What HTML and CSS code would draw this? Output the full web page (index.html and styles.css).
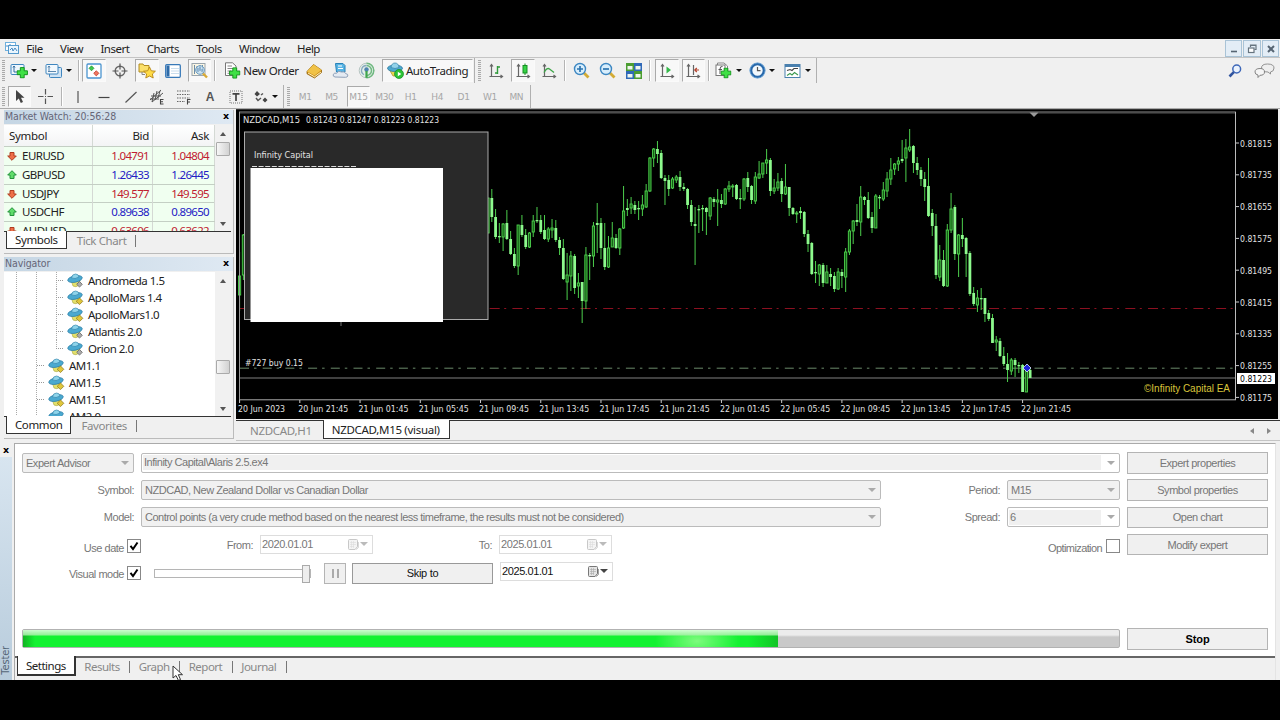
FILE: index.html
```
<!DOCTYPE html>
<html lang="en">
<head>
    <meta charset="UTF-8">
    <meta name="viewport" content="width=device-width, initial-scale=1.0">
    <title>NZDCAD,M15 (visual)</title>
    <link rel="stylesheet" href="styles.css">
</head>
<body>
    <!-- Shared icons -->
    <svg class="defs" width="0" height="0">
        <symbol id="expert" viewBox="0 0 17 15">
            <path d="M4 7 L6 13 Q9 15 12 12 L13 7Z" fill="#e3e06a" stroke="#a9a640" stroke-width=".6"/>
            <ellipse cx="8" cy="6" rx="7.4" ry="3.2" transform="rotate(-12 8 6)" fill="#4aa9d0" stroke="#2a7ca5" stroke-width=".7"/>
            <path d="M4.5 5 Q5 1 8.500 1 Q11.500 1 12 4 Q8 6.500 4.500 5Z" fill="#8fd4ea" stroke="#2a7ca5" stroke-width=".6"/>
            <path d="M12.500 8 L15.800 11.300 L12.500 14.600 L9.200 11.300Z" fill="#e0c63a" stroke="#927d20" stroke-width=".8"/>
        </symbol>
        <symbol id="expert-off" viewBox="0 0 17 15">
            <path d="M4 7 L6 13 Q9 15 12 12 L13 7Z" fill="#e3e06a" stroke="#a9a640" stroke-width=".6"/>
            <ellipse cx="8" cy="6" rx="7.4" ry="3.2" transform="rotate(-12 8 6)" fill="#4aa9d0" stroke="#2a7ca5" stroke-width=".7"/>
            <path d="M4.5 5 Q5 1 8.500 1 Q11.500 1 12 4 Q8 6.500 4.500 5Z" fill="#8fd4ea" stroke="#2a7ca5" stroke-width=".6"/>
            <path d="M12.500 8.500 L15.300 11.300 L12.500 14.100 L9.700 11.300Z" fill="#aaa" stroke="#666" stroke-width=".8"/>
        </symbol>
        <symbol id="up" viewBox="0 0 10 10">
            <path d="M5 .7 L9.300 5 H7 V8.500 H3 V5 H.7Z" fill="#5fdc6a" stroke="#23923a"/>
        </symbol>
        <symbol id="down" viewBox="0 0 10 10">
            <path d="M5 9.300 L9.300 5 H7 V1.500 H3 V5 H.7Z" fill="#ee7048" stroke="#b03c20"/>
        </symbol>
        <symbol id="plus" viewBox="0 0 12 12">
            <path d="M4 .6 H8 V4 H11.400 V8 H8 V11.400 H4 V8 H.6 V4 H4Z" fill="#3fe045" stroke="#14911d"/>
        </symbol>
        <symbol id="calendar" viewBox="0 0 11 11">
            <path d="M.5 1.500 Q.5 .5 1.500 .5 H8.500 Q9.500 .5 9.500 1.500 V7.500 L7 10.500 H1.500 Q.5 10.500 .5 9.500Z" fill="#e4e4e4" stroke="#777"/>
            <path d="M2 3.500 H8 M2 5.500 H8 M2 7.500 H6 M3.500 2 V9 M5.500 2 V9" stroke="#aaa" stroke-width=".6"/>
            <path d="M10.200 3 V8.500 L8 10.700" fill="none" stroke="#555" stroke-width=".8"/>
        </symbol>
        <symbol id="check" viewBox="0 0 10 10">
            <path d="M1.500 4.800 L4 8 L8.500 1.500" fill="none" stroke="#000" stroke-width="2"/>
        </symbol>
    </svg>

    <div class="terminal">
        <div class="menubar">
            <svg class="logo" width="14" height="14" viewBox="0 0 14 14"><rect x=".5" y="1.500" width="10" height="8" fill="#fff" stroke="#6fb0dd"/><rect x="3.500" y="4.500" width="10" height="8" fill="#eaf5fd" stroke="#5599cc"/><path d="M5 9 L7 7 L8 10 L10 7 L12 10 M2 4 V6 M5 3 V4" fill="none" stroke="#4a8cc4"/></svg>
            <span>File</span>
            <span>View</span>
            <span>Insert</span>
            <span>Charts</span>
            <span>Tools</span>
            <span>Window</span>
            <span>Help</span>
            <div class="window-buttons">
                <i><svg width="16" height="16" viewBox="0 0 16 16"><path d="M5 10.500 H11" stroke="#566573" stroke-width="1.600"/></svg></i>
                <i><svg width="16" height="16" viewBox="0 0 16 16"><path d="M6.500 6 V4 H12 V8.500 H10.500 M6.500 4.500 H12" fill="none" stroke="#66747f" stroke-width="1.200"/><rect x="4.500" y="7" width="5.500" height="4.500" fill="#fff" stroke="#66747f" stroke-width="1.200"/></svg></i>
                <i><svg width="16" height="16" viewBox="0 0 16 16"><path d="M5 5 L11 11 M11 5 L5 11" stroke="#566573" stroke-width="2"/></svg></i>
            </div>
        </div>

        <div class="toolbar toolbar-main">
            <i class="grip"></i>
            <div class="tool drop">
                <svg width="18" height="16" viewBox="0 0 18 16"><rect x="1" y="1.500" width="13" height="10" rx="1" fill="#eef6fd" stroke="#3f86bf"/><path d="M4 3 V9 H9 M3 4.500 L4 3 L5 4.500" fill="none" stroke="#356f9f"/><use href="#plus" x="6.500" y="4" width="11.500" height="11.500"/></svg>
                <b class="caret"></b>
            </div>
            <div class="tool drop">
                <svg width="18" height="16" viewBox="0 0 18 16"><rect x="4.500" y="4.500" width="12" height="10" rx="1" fill="#cfe3f4" stroke="#3f86bf"/><rect x="1" y="1.500" width="12" height="9.500" rx="1" fill="#f2f8fd" stroke="#3f86bf"/><path d="M4 3 V8.500 H11 M3 4.500 L4 3 L5 4.500 M3 8.500 H4" fill="none" stroke="#4a7ba6" stroke-width=".9"/></svg>
                <b class="caret"></b>
            </div>
            <i class="sep sep-thin"></i>
            <div class="tool pressed"><svg width="16" height="16" viewBox="0 0 16 16"><rect x="1" y="1" width="14" height="14" rx="1" fill="#fff" stroke="#4b94cf" stroke-width="1.300"/><path d="M5.500 2.800 L8 5.300 L5.500 7.800 L3 5.300Z" fill="#3fc84a" stroke="#1d8c2c" stroke-width=".7"/><path d="M10.300 7.700 L12.900 10.300 L10.300 12.900 L7.700 10.300Z" fill="#ef7660" stroke="#b6301c" stroke-width=".7"/></svg></div>
            <div class="tool"><svg width="16" height="16" viewBox="0 0 16 16"><circle cx="8" cy="8" r="4.800" fill="none" stroke="#666" stroke-width="1.400"/><path d="M8 .5 V6.500 M8 9.500 V15.500 M.5 8 H6.500 M9.500 8 H15.500" stroke="#555" stroke-width="1.200"/></svg></div>
            <div class="tool pressed"><svg width="18" height="17" viewBox="0 0 18 17"><path d="M1 2 H5 L6 3.500 H11 V10 H1Z" fill="#fbe06a" stroke="#b28c22"/><path d="M4 10 V12.500 H7" fill="none" stroke="#888"/><path d="M11.500 5 L13.300 8.800 L17.400 9.200 L14.400 12 L15.200 16 L11.500 14 L7.800 16 L8.600 12 L5.600 9.200 L9.700 8.800Z" fill="#ffdb45" stroke="#b58416" stroke-width=".9"/></svg></div>
            <div class="tool"><svg width="16" height="14" viewBox="0 0 16 14"><rect x=".7" y=".7" width="14.600" height="12.600" rx="1" fill="#fff" stroke="#3879b8" stroke-width="1.300"/><rect x="1.500" y="1.500" width="3" height="11" fill="#2d6aa8"/><path d="M6 4.500 H14 M6 7 H14 M6 9.500 H14" stroke="#c9dded"/></svg></div>
            <div class="tool pressed"><svg width="18" height="17" viewBox="0 0 18 17"><rect x="1" y="1.500" width="13" height="12" fill="#fbf6e4" stroke="#9aa5ad"/><path d="M3.500 3 V12 M6 4 V9 M9 3 V8 M11.500 3 V9" stroke="#6c8da8"/><circle cx="9" cy="8" r="4.300" fill="#bddcf3" fill-opacity=".75" stroke="#6798c0"/><path d="M7 6 V10 M9 5 V9 M11 7 V10" stroke="#4c7ca8" stroke-width=".8"/><path d="M12 11.500 L16 15.500" stroke="#d8aa36" stroke-width="2.400"/></svg></div>
            <i class="sep sep-wide"></i>
            <div class="tool new-order">
                <svg width="17" height="17" viewBox="0 0 17 17"><path d="M1.500 .8 H8.500 L12 4 V13.500 H1.500Z" fill="#fff" stroke="#777"/><path d="M3.500 4 H8 M3.500 6.500 H10 M3.500 9 H7 M3.500 11.300 H6" stroke="#888"/><use href="#plus" x="5" y="5.200" width="11.500" height="11.500"/></svg>
                <span>New Order</span>
            </div>
            <div class="tool"><svg width="17" height="16" viewBox="0 0 17 16"><path d="M1 8.500 L7.500 1.500 L15.500 7 L15.500 9.500 L8.500 15 L1 10.800Z" fill="#c98a12" stroke="#94640c" stroke-width=".8"/><path d="M1 8.500 L7.500 1.500 L15.500 7 L8.500 12.500Z" fill="#f0c247"/><path d="M2 10 L8.500 13.800 L15 9" fill="none" stroke="#fff3c2"/></svg></div>
            <div class="tool"><svg width="17" height="17" viewBox="0 0 17 17"><path d="M3.500 1.500 H11 L13 3.500 V10 H4.500Z" fill="#58b4e4" stroke="#2782b9"/><path d="M6 4 H10 M6 6.500 H11" stroke="#fff" stroke-width="1.200"/><path d="M3 15 Q.5 14.500 1.300 12.300 Q2.500 10.500 4.500 11.300 Q6.500 8 9.500 10 Q13 9 13.500 11.500 Q16.500 12 15.800 14 Q15.300 15.300 13.500 15.300Z" fill="#e4eaf2" stroke="#8fa0b8"/></svg></div>
            <div class="tool"><svg width="17" height="17" viewBox="0 0 17 17"><circle cx="8.500" cy="8.500" r="7.300" fill="#e4eee9" stroke="#b6c4c2"/><path d="M8.500 3.500 A5 5 0 0 1 8.500 13.500 M8.500 1.200 A7.300 7.300 0 0 1 8.500 15.800" fill="none" stroke="#70b980" stroke-width="1.500"/><path d="M8.500 3.500 A5 5 0 0 0 6 12.800" fill="none" stroke="#87a9bf" stroke-width="1.300"/><circle cx="8.500" cy="7.500" r="2.200" fill="#4e84ae"/><path d="M8.500 9 V15.800" stroke="#3ea54b" stroke-width="2.200"/></svg></div>
            <div class="tool pressed auto">
                <svg width="17" height="17" viewBox="0 0 17 17"><path d="M2 7 L6 14 H12 L14 7Z" fill="#ead650" stroke="#a58f27" stroke-width=".7"/><ellipse cx="8" cy="6.300" rx="7.500" ry="3.300" fill="#4ea8cf" stroke="#2a7399" stroke-width=".7"/><path d="M4 5.500 Q4.500 1 8 1 Q11.500 1 12 5.500 Q8 7.500 4 5.500Z" fill="#92d2ea" stroke="#3382a8" stroke-width=".7"/><circle cx="12" cy="12" r="4.500" fill="#2cc336" stroke="#168a22" stroke-width=".7"/><path d="M10.800 9.800 L14.300 12 L10.800 14.200Z" fill="#fff"/></svg>
                <span>AutoTrading</span>
            </div>
            <i class="end"></i>
            <i class="grip"></i>
            <div class="tool"><svg width="16" height="16" viewBox="0 0 16 16"><path d="M3.500 2 V13.500 H14 M2 3.500 L3.500 1.500 L5 3.500 M12.500 12 L14.500 13.500 L12.500 15 M1.500 13.500 H3" fill="none" stroke="#666" stroke-width="1.200"/><path d="M9.500 3 V11 M9.500 4 H12 M7 10 H9.500" stroke="#2f9a3a" stroke-width="1.400"/></svg></div>
            <div class="tool pressed"><svg width="16" height="16" viewBox="0 0 16 16"><path d="M3.500 2 V13.500 H14 M2 3.500 L3.500 1.500 L5 3.500 M12.500 12 L14.500 13.500 L12.500 15 M1.500 13.500 H3" fill="none" stroke="#666" stroke-width="1.200"/><path d="M10 .5 V12" stroke="#168f23"/><rect x="8" y="2.500" width="4" height="7.500" fill="#35d345" stroke="#168f23"/></svg></div>
            <div class="tool"><svg width="16" height="16" viewBox="0 0 16 16"><path d="M3.500 2 V13.500 H14 M2 3.500 L3.500 1.500 L5 3.500 M12.500 12 L14.500 13.500 L12.500 15 M1.500 13.500 H3" fill="none" stroke="#666" stroke-width="1.200"/><path d="M3 9.500 Q6 4 8.500 6 L13 9.500" fill="none" stroke="#3da548" stroke-width="1.300"/></svg></div>
            <i class="sep"></i>
            <div class="tool"><svg width="17" height="17" viewBox="0 0 17 17"><path d="M10 10 L15.500 15.500" stroke="#d3ab35" stroke-width="2.800"/><circle cx="7" cy="7" r="5.500" fill="#d8eefc" stroke="#3d87c2" stroke-width="1.400"/><path d="M4 7 H10 M7 4 V10" stroke="#2d74af" stroke-width="1.700"/></svg></div>
            <div class="tool"><svg width="17" height="17" viewBox="0 0 17 17"><path d="M10 10 L15.500 15.500" stroke="#d3ab35" stroke-width="2.800"/><circle cx="7" cy="7" r="5.500" fill="#d8eefc" stroke="#3d87c2" stroke-width="1.400"/><path d="M4 7 H10" stroke="#2d74af" stroke-width="1.700"/></svg></div>
            <div class="tool"><svg width="16" height="16" viewBox="0 0 16 16"><rect width="8" height="8" fill="#4b9d31"/><rect x="8" width="8" height="8" fill="#2f68b8"/><rect y="8" width="8" height="8" fill="#2f68b8"/><rect x="8" y="8" width="8" height="8" fill="#4b9d31"/><path d="M1.500 3 H6.500 V6.500 H1.500Z M9.500 3 H14.500 V6.500 H9.500Z M1.500 11 H6.500 V14.500 H1.500Z M9.500 11 H14.500 V14.500 H9.500Z" fill="#eef6ee"/></svg></div>
            <i class="sep"></i>
            <div class="tool pressed"><svg width="16" height="16" viewBox="0 0 16 16"><path d="M3.500 2 V13.500 H14 M2 3.500 L3.500 1.500 L5 3.500 M12.500 12 L14.500 13.500 L12.500 15 M1.500 13.500 H3" fill="none" stroke="#666" stroke-width="1.200"/><path d="M7.500 3.500 L12 7 L7.500 10.500Z" fill="#35b94a"/></svg></div>
            <div class="tool pressed"><svg width="16" height="16" viewBox="0 0 16 16"><path d="M3.500 2 V13.500 H14 M2 3.500 L3.500 1.500 L5 3.500 M12.500 12 L14.500 13.500 L12.500 15 M1.500 13.500 H3 M8.500 2 V12" fill="none" stroke="#666" stroke-width="1.200"/><path d="M9.500 7 H14 M11.800 5 L9.800 7 L11.800 9" fill="none" stroke="#b5442e" stroke-width="1.200"/></svg></div>
            <i class="sep sep-thin"></i>
            <div class="tool drop indicators">
                <svg width="18" height="17" viewBox="0 0 18 17"><path d="M2.500 3 V1 H9 L12.500 4 V12 H11" fill="#fff" stroke="#888"/><rect x="1" y="3" width="9" height="10.500" fill="#fff" stroke="#777"/><path d="M7.500 4.500 Q5 4 5 7 V12 M3.500 7.500 H7" fill="none" stroke="#555"/><use href="#plus" x="5.500" y="5.500" width="11" height="11"/></svg>
                <b class="caret"></b>
            </div>
            <div class="tool drop">
                <svg width="17" height="17" viewBox="0 0 17 17"><circle cx="8.500" cy="8.500" r="6.500" fill="#f1f8fd" stroke="#2868aa" stroke-width="2.600"/><circle cx="8.500" cy="8.500" r="7.600" fill="none" stroke="#76aee0" stroke-width=".8"/><path d="M8.500 5 V8.700 H11.500" fill="none" stroke="#555" stroke-width="1.200"/></svg>
                <b class="caret"></b>
            </div>
            <div class="tool drop">
                <svg width="18" height="16" viewBox="0 0 18 16"><rect x="1" y="1.500" width="15" height="13" fill="#fff" stroke="#4a80ae"/><path d="M1 3 H16" stroke="#4a80ae" stroke-width="2"/><path d="M3 7.500 L6 6.500 L8 7.500 L10 5.500 H14" fill="none" stroke="#444" stroke-width="1.100"/><path d="M3 12.500 L6 10.500 L8 12 L10.500 9.500 L14 12" fill="none" stroke="#3d9a50" stroke-width="1.100"/></svg>
                <b class="caret"></b>
            </div>
            <i class="end"></i>
            <div class="toolbar-right">
                <svg width="14" height="14" viewBox="0 0 14 14"><circle cx="8.700" cy="5" r="3.900" fill="#eaf2fd" stroke="#3d67b8" stroke-width="1.500"/><path d="M5.800 8.200 L1.500 12.500" stroke="#31549f" stroke-width="2.600"/></svg>
                <svg width="21" height="16" viewBox="0 0 21 16"><path d="M13.500 1 Q20 1 20 5 Q20 8.500 16.500 9 L16.500 11 L14 9 Q7.500 9 7.500 5 Q7.500 1 13.500 1Z" fill="#eee" stroke="#888" stroke-width=".9"/><path d="M6 5.500 Q10.500 5.500 10.500 9 Q10.500 12.300 6 12.300 L4 14.500 V12 Q1 11.500 1 9 Q1 5.500 6 5.500Z" fill="#f5f5f5" stroke="#777" stroke-width=".9"/></svg>
            </div>
        </div>

        <div class="toolbar toolbar-line">
            <i class="grip"></i>
            <div class="tool pressed pointer"><svg width="12" height="16" viewBox="0 0 12 16"><path d="M2 1 V12 L4.800 9.500 L6.800 14 L9 13 L7 8.800 H10.500Z" fill="#444"/></svg></div>
            <div class="tool"><svg width="15" height="15" viewBox="0 0 15 15"><path d="M7.500 0 V5.500 M7.500 9.500 V15 M0 7.500 H5.500 M9.500 7.500 H15 M7 7.500 H8" stroke="#555" stroke-width="1.200"/></svg></div>
            <i class="sep"></i>
            <div class="tool"><svg width="14" height="14" viewBox="0 0 14 14"><path d="M7 1 V13" stroke="#555" stroke-width="1.200"/></svg></div>
            <div class="tool"><svg width="14" height="14" viewBox="0 0 14 14"><path d="M1.500 7.500 H12.500" stroke="#444" stroke-width="1.200"/></svg></div>
            <div class="tool"><svg width="14" height="14" viewBox="0 0 14 14"><path d="M1.500 12.500 L12.500 2" stroke="#555" stroke-width="1.200"/></svg></div>
            <div class="tool"><svg width="16" height="16" viewBox="0 0 16 16"><path d="M1 11 L12 1 M3 13 L14 4 M5 4 L3 13 M8 2 L6 11 M11 2 L9 9 M2 7 H12 M1 10 H10" stroke="#555"/><path d="M14.500 10.500 H11.500 V15 H14.500 M11.500 12.700 H14" fill="none" stroke="#444" stroke-width="1.100"/></svg></div>
            <div class="tool"><svg width="16" height="16" viewBox="0 0 16 16"><path d="M1 2 H14 M1 5.500 H14 M1 9 H14 M1 12.500 H9" stroke="#666" stroke-dasharray="1.500 1"/><path d="M14.500 10.500 H11.500 V15.500 M11.500 13 H14" fill="none" stroke="#444" stroke-width="1.100"/></svg></div>
            <div class="tool letter">A</div>
            <div class="tool"><svg width="14" height="14" viewBox="0 0 14 14"><rect x="1" y="1" width="12" height="12" fill="none" stroke="#777" stroke-dasharray="1 1"/><path d="M3.500 3.800 H10.500 M7 3.500 V11" stroke="#444" stroke-width="1.700"/></svg></div>
            <div class="tool drop shapes">
                <svg width="16" height="14" viewBox="0 0 16 14"><path d="M4 1 L7 4 L4 6.500 L1.500 4Z M12 7.500 L14.500 10 L12 12.500 L9.500 10Z" fill="#444"/><path d="M8 5 L10 3.500 M3 8 L5 10.500 L8 8" fill="none" stroke="#555" stroke-width="1.500"/></svg>
                <b class="caret"></b>
            </div>
            <i class="end"></i>
            <i class="grip"></i>
            <div class="tool frame">M1</div>
            <div class="tool frame">M5</div>
            <div class="tool frame pressed">M15</div>
            <div class="tool frame">M30</div>
            <div class="tool frame">H1</div>
            <div class="tool frame">H4</div>
            <div class="tool frame">D1</div>
            <div class="tool frame">W1</div>
            <div class="tool frame">MN</div>
            <i class="end"></i>
        </div>

        <div class="workspace">
            <div class="sidebar">
                <div class="dock market">
                    <div class="dock-title"><span>Market Watch: 20:56:28</span><b>x</b></div>
                    <div class="dock-body">
                        <div class="quotes">
                            <div class="quote quote-head"><span>Symbol</span><span>Bid</span><span>Ask</span></div>
                            <div class="quote fall"><span><svg width="10" height="10"><use href="#down"/></svg>EURUSD</span><span>1.04791</span><span>1.04804</span></div>
                            <div class="quote rise"><span><svg width="10" height="10"><use href="#up"/></svg>GBPUSD</span><span>1.26433</span><span>1.26445</span></div>
                            <div class="quote fall"><span><svg width="10" height="10"><use href="#down"/></svg>USDJPY</span><span>149.577</span><span>149.595</span></div>
                            <div class="quote rise"><span><svg width="10" height="10"><use href="#up"/></svg>USDCHF</span><span>0.89638</span><span>0.89650</span></div>
                            <div class="quote fall"><span><svg width="10" height="10"><use href="#down"/></svg>AUDUSD</span><span>0.63606</span><span>0.63622</span></div>
                        </div>
                        <div class="scrollbar"><i class="arrow-up"></i><i class="thumb"></i><i class="arrow-down"></i></div>
                    </div>
                    <div class="tabs"><span class="active">Symbols</span><span>Tick Chart</span></div>
                </div>

                <div class="dock navigator">
                    <div class="dock-title"><span>Navigator</span><b>x</b></div>
                    <div class="dock-body">
                        <div class="tree">
                            <div class="node deep"><svg width="17" height="15"><use href="#expert-off"/></svg>Andromeda 1.5</div>
                            <div class="node deep"><svg width="17" height="15"><use href="#expert"/></svg>ApolloMars 1.4</div>
                            <div class="node deep"><svg width="17" height="15"><use href="#expert"/></svg>ApolloMars1.0</div>
                            <div class="node deep"><svg width="17" height="15"><use href="#expert-off"/></svg>Atlantis 2.0</div>
                            <div class="node deep last"><svg width="17" height="15"><use href="#expert-off"/></svg>Orion 2.0</div>
                            <div class="node"><svg width="17" height="15"><use href="#expert"/></svg>AM1.1</div>
                            <div class="node"><svg width="17" height="15"><use href="#expert"/></svg>AM1.5</div>
                            <div class="node"><svg width="17" height="15"><use href="#expert"/></svg>AM1.51</div>
                            <div class="node"><svg width="17" height="15"><use href="#expert"/></svg>AM2.0</div>
                        </div>
                        <div class="scrollbar"><i class="arrow-up"></i><i class="thumb low"></i><i class="arrow-down"></i></div>
                    </div>
                    <div class="tabs"><span class="active">Common</span><span>Favorites</span></div>
                </div>
            </div>

            <div class="chart-area">
                <svg id="chart" class="chart" width="1042" height="310" viewBox="236 109 1042 310"></svg>
                <div class="tabs chart-tabs">
                    <span>NZDCAD,H1</span>
                    <span class="active">NZDCAD,M15 (visual)</span>
                    <div class="tab-arrows"><i class="left"></i><i class="right"></i></div>
                </div>
            </div>
        </div>

        <div class="tester">
            <div class="tester-strip"><b>x</b><div class="strip-title"><span>Tester</span></div></div>
            <div class="tester-main">
                <div class="tester-form">
                    <div class="fields">
                        <div class="row">
                            <div class="select w-small">Expert Advisor<i></i></div>
                            <div class="select combo w-full"><em>Infinity Capital\Alaris 2.5.ex4</em><i></i></div>
                        </div>
                        <div class="row">
                            <label class="w-small">Symbol:</label>
                            <div class="select w-long">NZDCAD, New Zealand Dollar vs Canadian Dollar<i></i></div>
                            <label class="w-mid">Period:</label>
                            <div class="select w-short">M15<i></i></div>
                        </div>
                        <div class="row">
                            <label class="w-small">Model:</label>
                            <div class="select w-long model">Control points (a very crude method based on the nearest less timeframe, the results must not be considered)<i></i></div>
                            <label class="w-mid">Spread:</label>
                            <div class="select combo w-short"><em>6</em><i></i></div>
                        </div>
                        <div class="row dates">
                            <label class="w-check">Use date</label>
                            <div class="checkbox"><svg width="10" height="10"><use href="#check"/></svg></div>
                            <label class="w-from">From:</label>
                            <div class="date disabled">2020.01.01<svg width="11" height="11"><use href="#calendar"/></svg><i></i></div>
                            <label class="w-to">To:</label>
                            <div class="date disabled">2025.01.01<svg width="11" height="11"><use href="#calendar"/></svg><i></i></div>
                            <label class="optimization">Optimization</label>
                            <div class="checkbox"></div>
                        </div>
                        <div class="row">
                            <label class="w-check">Visual mode</label>
                            <div class="checkbox"><svg width="10" height="10"><use href="#check"/></svg></div>
                            <div class="slider"><i></i></div>
                            <div class="button pause"><i></i><i></i></div>
                            <div class="button skip">Skip to</div>
                            <div class="date">2025.01.01<svg width="11" height="11"><use href="#calendar"/></svg><i></i></div>
                        </div>
                    </div>
                    <div class="actions">
                        <div class="button">Expert properties</div>
                        <div class="button">Symbol properties</div>
                        <div class="button">Open chart</div>
                        <div class="button">Modify expert</div>
                    </div>
                </div>
                <div class="progress-row">
                    <div class="progress"><div class="progress-bar" style="width: 68.9%"></div></div>
                    <div class="button stop">Stop</div>
                </div>
                <div class="tabs tester-tabs">
                    <span class="active">Settings</span>
                    <span>Results</span>
                    <span>Graph</span>
                    <span>Report</span>
                    <span>Journal</span>
                </div>
            </div>
            <svg class="cursor" width="13" height="16" viewBox="0 0 13 16"><path d="M1 1 V13 L4 10.500 L6.500 15.500 L8.500 14.500 L6.300 9.700 H10.500Z" fill="#fff" stroke="#333"/></svg>
        </div>
    </div>
    <script src="chart.js"></script>
</body>
</html>
```
FILE: styles.css
```
* {
    margin: 0;
    padding: 0;
    box-sizing: border-box;
}

body {
    width: 1280px;
    height: 720px;
    overflow: hidden;
    background: #000;
    font-family: "Noto Sans", "Open Sans", sans-serif;
    font-size: 11.5px;
    letter-spacing: -0.4px;
    color: #222;
}

i, em {
    font-style: normal;
}

svg {
    display: block;
    flex: none;
}

.defs {
    position: absolute;
}

.terminal {
    margin-top: 39px;
    height: 641px;
    background: #f0f0f0;
    display: flex;
    flex-direction: column;
    overflow: hidden;
}

/* Menu */
.menubar {
    height: 19px;
    border-bottom: 1px solid #c4c4c4;
    display: flex;
    align-items: center;
    padding-left: 5px;
    gap: 17.300px;
    line-height: 17px;
    letter-spacing: -0.5px;
}

.menubar .logo {
    margin-right: -10px;
}

.window-buttons {
    margin-left: auto;
    margin-right: 1px;
    display: flex;
    gap: 1px;
}

.window-buttons i {
    width: 17.500px;
    height: 17px;
    border: 1px solid #a9c3d6;
    background: #e3edf6;
}

/* Toolbars */
.toolbar {
    display: flex;
    align-items: stretch;
    flex: none;
}

.toolbar-main {
    height: 25px;
}

.toolbar-line {
    height: 26px;
    padding: 2px 0 0;
    border-bottom: 1px solid #aaa;
}

.grip {
    width: 3px;
    margin: 2px 1px 1px 2px;
    background: repeating-linear-gradient(#aaa 0 1px, #eee 1px 2px);
}

.end + .grip {
    margin-right: 2px;
}

.tool {
    width: 26.400px;
    display: flex;
    align-items: center;
    justify-content: center;
    flex: none;
}

.pressed {
    border: 1px solid #aaa;
    border-right-color: #fafafa;
    border-bottom-color: #fafafa;
    background: #f8f8f8;
    margin: 1px 1px 1px 2px;
    width: 23.400px;
}

.pointer {
    margin-left: 2px;
}

.drop {
    width: 35.200px;
    gap: 3px;
    padding-right: 1px;
}

.indicators {
    padding: 0 0 0 2px;
}

.shapes {
    width: 33.500px;
}

.caret {
    border: 3px solid transparent;
    border-top-color: #111;
    border-bottom: 0;
}

.sep {
    width: 6px;
    margin: 2px 0;
    background: linear-gradient(90deg, transparent 2px, #b4b4b4 2px 3px, #fff 3px 4px, transparent 4px);
}

.sep-thin {
    width: 4px;
}

.sep-wide {
    width: 8px;
}

.end {
    width: 2px;
    border-left: 1px solid #b0b0b0;
}

.new-order {
    width: 80.500px;
    justify-content: flex-start;
    padding-left: 4px;
    gap: 2px;
    white-space: nowrap;
}

.auto {
    width: 91px;
    gap: 2px;
}

.letter {
    font: bold 12px "Liberation Sans", sans-serif;
    color: #555;
}

.frame {
    font: 9px "DejaVu Sans", sans-serif;
    color: #a6a6a6;
    letter-spacing: -0.3px;
}

.toolbar-right {
    margin-left: auto;
    margin-right: 5px;
    display: flex;
    align-items: center;
    gap: 12px;
}

/* Docked panels */
.workspace {
    display: flex;
    height: 332px;
    flex: none;
}

.sidebar {
    width: 236px;
    padding: 1px 2px 0 4px;
    display: flex;
    flex-direction: column;
    gap: 3px;
}

.dock {
    border-bottom: 1px solid #bbb;
    border-right: 1px solid #bbb;
}

.market {
    height: 144px;
}

.navigator {
    height: 182px;
}

.dock-title {
    height: 14px;
    display: flex;
    justify-content: space-between;
    align-items: center;
    padding: 0 4px 2px 1px;
    background: linear-gradient(90deg, #c5d6e4, #dfe9f3);
    font: 10.500px "DejaVu Sans Condensed", sans-serif;
    letter-spacing: -0.1px;
    color: #667;
}

.dock-title b,
.tester-strip b {
    font: bold 9.500px/10px "DejaVu Sans", sans-serif;
    color: #000;
}

.dock-body {
    display: flex;
    overflow: hidden;
    border-bottom: 1px solid #333;
    margin-top: 1px;
    background: #fff;
    margin-right: 2px;
}

.market .dock-body {
    height: 107px;
}

.navigator .dock-body {
    height: 145px;
}

.quotes,
.tree {
    flex: 1;
}

.quote {
    display: grid;
    grid-template-columns: 89px 60px 1fr;
    height: 18.800px;
    line-height: 18px;
    background: #f0fff0;
    border-bottom: 1px solid #c4cfc4;
}

.quote span {
    display: flex;
    align-items: center;
    justify-content: flex-end;
    padding-right: 3px;
    border-right: 1px solid #d4d9d4;
    letter-spacing: -0.7px;
}

.quote span:first-child {
    justify-content: flex-start;
    padding-left: 3px;
    gap: 5px;
    color: #222;
    letter-spacing: -0.5px;
}

.quote span:last-child {
    padding-right: 5px;
}

.quote-head {
    height: 22px;
    line-height: 21px;
    background: linear-gradient(#fff, #f3f4f5);
}

.quote-head span,
.quote-head span:first-child {
    letter-spacing: -0.3px;
}

.quote-head span:first-child {
    padding-left: 5px;
}

.fall {
    color: #c02030;
}

.rise {
    color: #2420c4;
}

.scrollbar {
    width: 16px;
    background: #f1f1f1;
    display: flex;
    flex-direction: column;
    align-items: center;
    padding: 7px 0 5px;
}

.arrow-up {
    border: 3px solid transparent;
    border-bottom: 4px solid #555;
    border-top: 0;
}

.arrow-down {
    border: 3px solid transparent;
    border-top: 4px solid #555;
    border-bottom: 0;
    margin-top: auto;
}

.thumb {
    width: 14px;
    height: 14px;
    margin-top: 6px;
    border: 1px solid #aaa;
    border-radius: 1px;
    background: linear-gradient(90deg, #f6f6f6, #d2d2d2);
}

.thumb.low {
    margin-top: 77px;
}

.tabs {
    display: flex;
    padding-left: 2px;
    line-height: 17px;
    color: #888;
}

.tabs span {
    padding: 0 10px;
    position: relative;
}

.tabs span:not(.active)::after {
    content: "";
    position: absolute;
    right: 0;
    top: 3px;
    height: 12px;
    border-right: 1px solid #777;
}

.tabs .active {
    margin-top: -1px;
    height: 18px;
    padding: 0 8px;
    background: #fff;
    color: #222;
    border: 1px solid #333;
    border-top: 0;
}

.dock .tabs {
    letter-spacing: -0.4px;
}

/* Navigator tree */
.tree {
    background:
        repeating-linear-gradient(#aaa 0 1px, #fff 1px 2px) 12px 0 / 1px 100% no-repeat,
        repeating-linear-gradient(#aaa 0 1px, #fff 1px 2px) 32px 0 / 1px 100% no-repeat;
}

.node {
    height: 17px;
    display: flex;
    align-items: center;
    gap: 4px;
    margin-left: 33px;
    line-height: 17px;
    color: #222;
    letter-spacing: -0.5px;
}

.node::before {
    content: "";
    width: 7px;
    border-top: 1px dotted #999;
}

.deep {
    margin-left: 52px;
    background: repeating-linear-gradient(#aaa 0 1px, #fff 1px 2px) 0 0 / 1px 100% no-repeat;
}

.deep.last {
    background-size: 1px 9px;
}

/* Chart */
.chart-area {
    width: 1044px;
}

.chart {
    background: #000;
}

.chart text {
    font-family: "DejaVu Sans Condensed", "DejaVu Sans", sans-serif;
    font-size: 9.500px;
    letter-spacing: 0;
    fill: #e2e2e2;
}

.chart .price-now {
    fill: #000;
}

.chart .copyright {
    font-family: "Liberation Sans", sans-serif;
    font-size: 11px;
    fill: #d8c43a;
}

.chart .wick {
    stroke: #4ccf4c;
}

.chart .bull {
    fill: #125c12;
    stroke: #4fd44f;
    stroke-width: .9;
}

.chart .bear {
    fill: #8dfa8d;
}

.chart-tabs {
    border-top: 1px solid #333;
    margin-top: 1px;
    padding-left: 0;
    height: 21px;
    border-bottom: 1px solid #c4c4c4;
}

.chart-tabs span {
    padding: 0 11px 0 14px;
    line-height: 19px;
    letter-spacing: -0.3px;
}

.chart-tabs span:not(.active)::after {
    display: none;
}

.chart-tabs .active {
    padding: 0 9px 0 8px;
    height: 19px;
}

.tab-arrows {
    margin-left: auto;
    margin-right: 9px;
    display: flex;
    align-items: center;
    gap: 13px;
}

.tab-arrows i {
    border: 3px solid transparent;
}

.tab-arrows .left {
    border-right: 4px solid #888;
    border-left: 0;
}

.tab-arrows .right {
    border-left: 4px solid #888;
    border-right: 0;
}

/* Strategy tester */
.tester {
    flex: 1;
    display: flex;
    padding-top: 2px;
    position: relative;
    font-family: "Liberation Sans", Arial, sans-serif;
    font-size: 11px;
    letter-spacing: -0.48px;
    color: #777;
}

.tester-strip {
    width: 14px;
    display: flex;
    flex-direction: column;
    align-items: flex-start;
    padding-top: 2px;
}

.tester-strip b {
    margin-left: 3px;
    margin-bottom: 2px;
}

.strip-title {
    flex: 1;
    width: 12px;
    background: linear-gradient(#d8e5f0, #b8ccdc);
    display: flex;
    align-items: flex-end;
    justify-content: center;
    padding-bottom: 5px;
}

.strip-title span {
    writing-mode: vertical-rl;
    transform: rotate(180deg);
    font: 10px/12px "DejaVu Sans", sans-serif;
    letter-spacing: -0.2px;
    color: #567;
}

.tester-main {
    width: 1262px;
    border: 1px solid #aaa;
    border-right-color: #e4e4e4;
    border-bottom: 0;
    background: #fff;
    display: flex;
    flex-direction: column;
}

.tester-form {
    display: flex;
    padding: 5px 0 0 7px;
    gap: 7px;
    height: 184px;
}

.fields {
    width: 1098px;
}

.row {
    display: flex;
    align-items: center;
    gap: 7px;
    height: 27.300px;
}

.row label {
    text-align: right;
}

.select {
    height: 20px;
    border: 1px solid #bbb;
    border-radius: 2px;
    background: #f1f1f1;
    display: flex;
    align-items: center;
    justify-content: space-between;
    padding: 0 4px 0 3px;
    white-space: nowrap;
}

.model {
    letter-spacing: -0.51px;
}

.select i,
.date i {
    border: 4px solid transparent;
    border-top-color: #aaa;
    border-bottom: 0;
}

.combo {
    background: #fff;
    padding-left: 1px;
}

.combo em {
    flex: 1;
    background: #f0f0f0;
    height: 15px;
    line-height: 14px;
    padding-left: 1px;
    margin-right: 6px;
}

.w-small {
    width: 112px;
}

.w-full {
    width: 979px;
}

.w-long {
    width: 740px;
}

.w-mid,
.w-to {
    width: 112px;
}

.w-short {
    width: 113px;
}

.w-check {
    width: 102px;
    margin-right: -4px;
    padding-top: 5px;
}

.w-from {
    width: 105px;
}

.checkbox {
    width: 14px;
    height: 14px;
    border: 1px solid #888;
    background: #fff;
    padding: 1px;
    margin-top: 3px;
}

.date {
    width: 113px;
    height: 19px;
    border: 1px solid #ddd;
    display: flex;
    align-items: center;
    padding: 0 4px 1px 1px;
    color: #111;
    letter-spacing: -0.4px;
}

.date svg {
    margin: 1px 1px 0 auto;
}

.date i {
    border-top-color: #444;
}

.disabled {
    color: #777;
}

.disabled svg {
    opacity: .4;
}

.disabled i {
    border-top-color: #bbb;
}

.dates label {
    padding-top: 1px;
}

.dates .w-check,
.dates .optimization {
    padding-top: 6px;
}

.optimization {
    margin-left: auto;
    margin-right: -3px;
    letter-spacing: -0.6px;
}

.slider {
    width: 157px;
    height: 9px;
    margin: 4px 6px 0 6px;
    border: 1px solid #b5b5b5;
    display: flex;
    justify-content: flex-end;
    align-items: center;
}

.slider i {
    width: 8px;
    height: 18px;
    flex: none;
    border: 1px solid #aaa;
    background: #eee;
}

.button {
    height: 21.500px;
    border: 1px solid #b4b4b4;
    background: #f0f0f0;
    display: flex;
    align-items: center;
    justify-content: center;
}

.pause {
    width: 22px;
    gap: 3px;
    margin-top: 3px;
}

.pause i {
    width: 2px;
    height: 9px;
    background: #aaa;
}

.skip {
    width: 141px;
    margin: 3px 0 0 -1px;
    border-color: #999;
    color: #111;
    letter-spacing: -0.3px;
}

.actions {
    width: 141px;
    display: flex;
    flex-direction: column;
    gap: 5.800px;
    padding-top: 3px;
}

.progress-row {
    display: flex;
    gap: 7px;
    padding-left: 7px;
    height: 28px;
    align-items: flex-start;
}

.progress {
    width: 1098px;
    height: 19px;
    margin-top: 1px;
    border: 1px solid #b2b2b2;
    border-radius: 2px;
    background: linear-gradient(#ececec 0 5px, #c9c9c9 7px);
}

.progress-bar {
    height: 17px;
    background:
        linear-gradient(rgba(225, 255, 225, .9), rgba(170, 240, 170, .85) 5px, transparent 6px),
        radial-gradient(ellipse 42px 22px at 674px 11px, #7dfb7d, transparent),
        linear-gradient(90deg, #12b323, #14f232 12px, #14f232 calc(100% - 30px), #12c426);
}

.stop {
    width: 141px;
    color: #000;
    font-weight: bold;
    letter-spacing: -0.1px;
}

.tester-tabs {
    flex: 1;
    background: #f0f0f0;
    border-top: 2px solid #666;
    padding-left: 2px;
    font-family: "Noto Sans", sans-serif;
    font-size: 11.500px;
    letter-spacing: -0.5px;
    line-height: 17px;
}

.tester-tabs span:not(.active) {
    padding: 0 10.500px 0 8.500px;
}

.tester-tabs .active {
    margin-top: -2px;
    height: 20px;
    padding-top: 1px;
    border-right-width: 2px;
    border-bottom-width: 2px;
}

.cursor {
    position: absolute;
    left: 172px;
    top: 224px;
}
```
FILE: chart.js
```
const NS = 'http://www.w3.org/2000/svg';
const chart = document.getElementById('chart');

// [high, bodyTop, bodyBottom, low, up]
const first = [
    [252, 276, 295, 311, 1], [234, 235, 275, 280, 1]
];
const candles = [
    [198, 198, 233, 233, 1], [189, 198, 217, 222, 0], [209, 217, 237, 239, 0], [223, 236, 237, 243, 0],
    [223, 224, 237, 251, 1], [210, 223, 239, 240, 0], [231, 239, 254, 255, 0], [248, 254, 266, 268, 0],
    [225, 225, 266, 275, 1], [215, 225, 235, 237, 0], [229, 235, 247, 249, 0], [232, 233, 247, 248, 1],
    [215, 221, 232, 237, 1], [207, 220, 221, 223, 0], [215, 220, 232, 234, 0], [215, 230, 239, 240, 0],
    [227, 229, 239, 242, 1], [219, 228, 230, 238, 1], [220, 228, 240, 242, 0], [237, 240, 248, 255, 0],
    [239, 248, 279, 280, 0], [253, 275, 282, 300, 1], [251, 256, 276, 291, 1], [254, 256, 288, 294, 0],
    [273, 283, 286, 298, 1], [282, 282, 301, 323, 0], [247, 255, 301, 309, 1], [253, 255, 256, 280, 0],
    [222, 226, 256, 267, 1], [203, 223, 225, 253, 0], [218, 223, 248, 259, 0], [223, 248, 267, 270, 0],
    [236, 248, 267, 268, 1], [222, 238, 247, 247, 1], [234, 238, 248, 249, 0], [228, 229, 248, 255, 1],
    [186, 211, 228, 229, 1], [199, 208, 210, 216, 0], [197, 204, 208, 214, 1], [201, 205, 210, 214, 0],
    [201, 208, 209, 220, 0], [195, 205, 209, 216, 1], [184, 191, 207, 208, 1], [157, 158, 191, 192, 1],
    [148, 149, 158, 167, 1], [141, 149, 154, 163, 0], [150, 153, 178, 179, 0], [175, 178, 181, 205, 0],
    [175, 180, 189, 196, 0], [177, 179, 188, 189, 1], [175, 177, 180, 183, 1], [171, 177, 187, 191, 0],
    [183, 187, 189, 191, 0], [188, 189, 205, 209, 0], [200, 205, 222, 226, 0], [207, 224, 226, 265, 0],
    [205, 209, 210, 233, 0], [205, 208, 209, 231, 0], [207, 208, 212, 235, 0], [197, 198, 216, 220, 1],
    [197, 199, 202, 207, 0], [189, 200, 202, 226, 1], [194, 200, 204, 208, 0], [188, 189, 204, 205, 1],
    [181, 186, 189, 192, 1], [184, 186, 187, 197, 1], [184, 185, 199, 200, 0], [189, 198, 199, 209, 0],
    [178, 179, 199, 201, 1], [172, 178, 187, 192, 0], [185, 186, 200, 204, 0], [172, 177, 201, 204, 1],
    [161, 174, 178, 179, 1], [163, 163, 174, 178, 1], [149, 160, 163, 174, 1], [158, 160, 191, 196, 0],
    [179, 188, 191, 194, 1], [173, 182, 188, 191, 1], [178, 181, 194, 202, 0], [164, 187, 194, 195, 1],
    [187, 187, 208, 216, 0], [207, 208, 214, 215, 0], [211, 213, 214, 223, 1], [207, 211, 213, 219, 0],
    [211, 212, 234, 237, 0], [230, 234, 244, 252, 0], [242, 243, 274, 275, 0], [261, 272, 273, 283, 0],
    [264, 265, 274, 286, 1], [263, 265, 283, 287, 0], [265, 272, 283, 283, 1], [268, 274, 277, 286, 0],
    [272, 276, 289, 292, 0], [268, 272, 289, 290, 1], [269, 272, 276, 288, 0], [248, 252, 277, 292, 1],
    [229, 231, 252, 255, 1], [220, 221, 231, 244, 1], [204, 220, 222, 226, 0], [186, 197, 222, 236, 1],
    [196, 197, 200, 205, 0], [192, 200, 218, 219, 0], [212, 217, 228, 233, 0], [194, 196, 228, 228, 1],
    [195, 197, 198, 209, 0], [182, 190, 199, 201, 1], [172, 179, 191, 197, 1], [158, 170, 179, 185, 1],
    [163, 164, 169, 175, 1], [157, 161, 164, 171, 1], [140, 159, 161, 163, 0], [139, 148, 158, 182, 1],
    [129, 147, 150, 152, 1], [145, 146, 163, 173, 0], [157, 163, 170, 175, 0], [167, 170, 179, 186, 0],
    [172, 179, 187, 201, 0], [158, 186, 216, 217, 0], [209, 213, 226, 236, 0], [214, 226, 275, 279, 0],
    [245, 260, 277, 281, 1], [250, 260, 286, 287, 0], [224, 230, 286, 287, 1], [193, 209, 230, 233, 1],
    [205, 207, 254, 260, 0], [234, 235, 254, 277, 1], [218, 235, 239, 247, 0], [237, 238, 254, 277, 0],
    [251, 253, 294, 296, 0], [287, 293, 304, 306, 0], [290, 298, 305, 312, 1], [288, 298, 299, 310, 0],
    [298, 298, 314, 322, 0], [310, 313, 319, 321, 0], [314, 318, 343, 343, 0], [336, 340, 342, 351, 1],
    [338, 341, 356, 357, 0], [347, 356, 364, 366, 0], [353, 364, 370, 382, 0], [358, 360, 371, 375, 1],
    [358, 360, 365, 377, 0], [362, 365, 366, 373, 0], [364, 365, 392, 392, 0], [369, 370, 392, 392, 1],
    [367, 370, 378, 378, 0]
];

const times = ['20 Jun 2023', '20 Jun 21:45', '21 Jun 01:45', '21 Jun 05:45', '21 Jun 09:45', '21 Jun 13:45',
    '21 Jun 17:45', '21 Jun 21:45', '22 Jun 01:45', '22 Jun 05:45', '22 Jun 09:45', '22 Jun 13:45',
    '22 Jun 17:45', '22 Jun 21:45'];

function add(tag, attrs, text) {
    const el = document.createElementNS(NS, tag);
    for (const key in attrs) {
        el.setAttribute(key, attrs[key]);
    }
    if (text) {
        el.textContent = text;
    }
    chart.appendChild(el);
}

function line(x1, y1, x2, y2, stroke, dash) {
    add('line', { x1, y1, x2, y2, stroke, 'stroke-dasharray': dash || 'none' });
}

function label(x, y, text, width, cls) {
    add('text', { x, y, textLength: width, lengthAdjust: 'spacingAndGlyphs', class: cls || '' }, text);
}

function drawCandle(index, c) {
    const x = 239.6 + 3.7644 * index;
    const [high, top, bottom, low, up] = c;
    add('line', { x1: x, x2: x, y1: high, y2: low, class: 'wick' });
    if (up) {
        add('rect', { x: x - 1.1, y: top, width: 2.2, height: Math.max(bottom - top, 1), class: 'bull' });
    } else {
        add('rect', { x: x - 1.4, y: top, width: 2.8, height: Math.max(bottom - top, 1.3), class: 'bear' });
    }
}

// Levels
line(240, 308.5, 1235, 308.5, '#8c1020', '10 4.5 2 6.2');
line(240, 368.2, 1235, 368.2, '#6b8a6b', '9 5 2.5 6.2');
line(240, 378, 1235, 378, '#808080');

first.forEach((c, i) => drawCandle(i, c));
candles.forEach((c, i) => drawCandle(i + 66, c));

// Buy marker
add('path', { d: 'M1027 364 L1031 368 L1027 372 L1023 368Z', fill: '#1c24d8', stroke: '#dfe6ff', 'stroke-width': .8 });

// Plot frame
line(236, 109.5, 1278, 109.5, '#333');
line(239, 112, 1236, 112, '#8c8c8c');
line(239, 113, 1236, 113, '#555');
line(239.5, 112, 239.5, 400, '#999');
line(1235.5, 112, 1235.5, 400, '#bbb');
line(239, 399.8, 1236, 399.8, '#aaa');
add('path', { d: 'M1029.500 112.500 H1038.500 L1034 117Z', fill: '#999' });

// Info panel
add('rect', { x: 244.5, y: 132, width: 243.5, height: 187.5, fill: '#292929', stroke: '#aaa' });
label(254, 158, 'Infinity Capital', 59);
line(252, 166.5, 356, 166.5, '#ddd', '5 1.6');
add('rect', { x: 250.5, y: 168, width: 192.5, height: 154, fill: '#fff' });
line(341, 322, 341, 326, '#777');

label(243, 123, 'NZDCAD,M15', 57);
label(306, 123, '0.81243 0.81247 0.81223 0.81223', 133);
label(245, 366, '#727 buy 0.15', 58);

// Price scale
for (let i = 0; i < 9; i++) {
    const y = 143 + i * 31.8;
    line(1236, y, 1239, y, '#ccc');
    label(1240, y + 3.5, '0.81' + (815 - i * 80), 32);
}
add('rect', { x: 1237, y: 373, width: 38, height: 11, fill: '#fff' });
label(1240, 382, '0.81223', 32, 'price-now');

// Time scale
times.forEach((time, i) => {
    const x = 239.6 + i * 60.23;
    line(x, 400, x, 403, '#ccc');
    label(x - 1.5, 412, time, i ? 50 : 47);
});

label(1144, 392, '©Infinity Capital EA', 86, 'copyright');
```
